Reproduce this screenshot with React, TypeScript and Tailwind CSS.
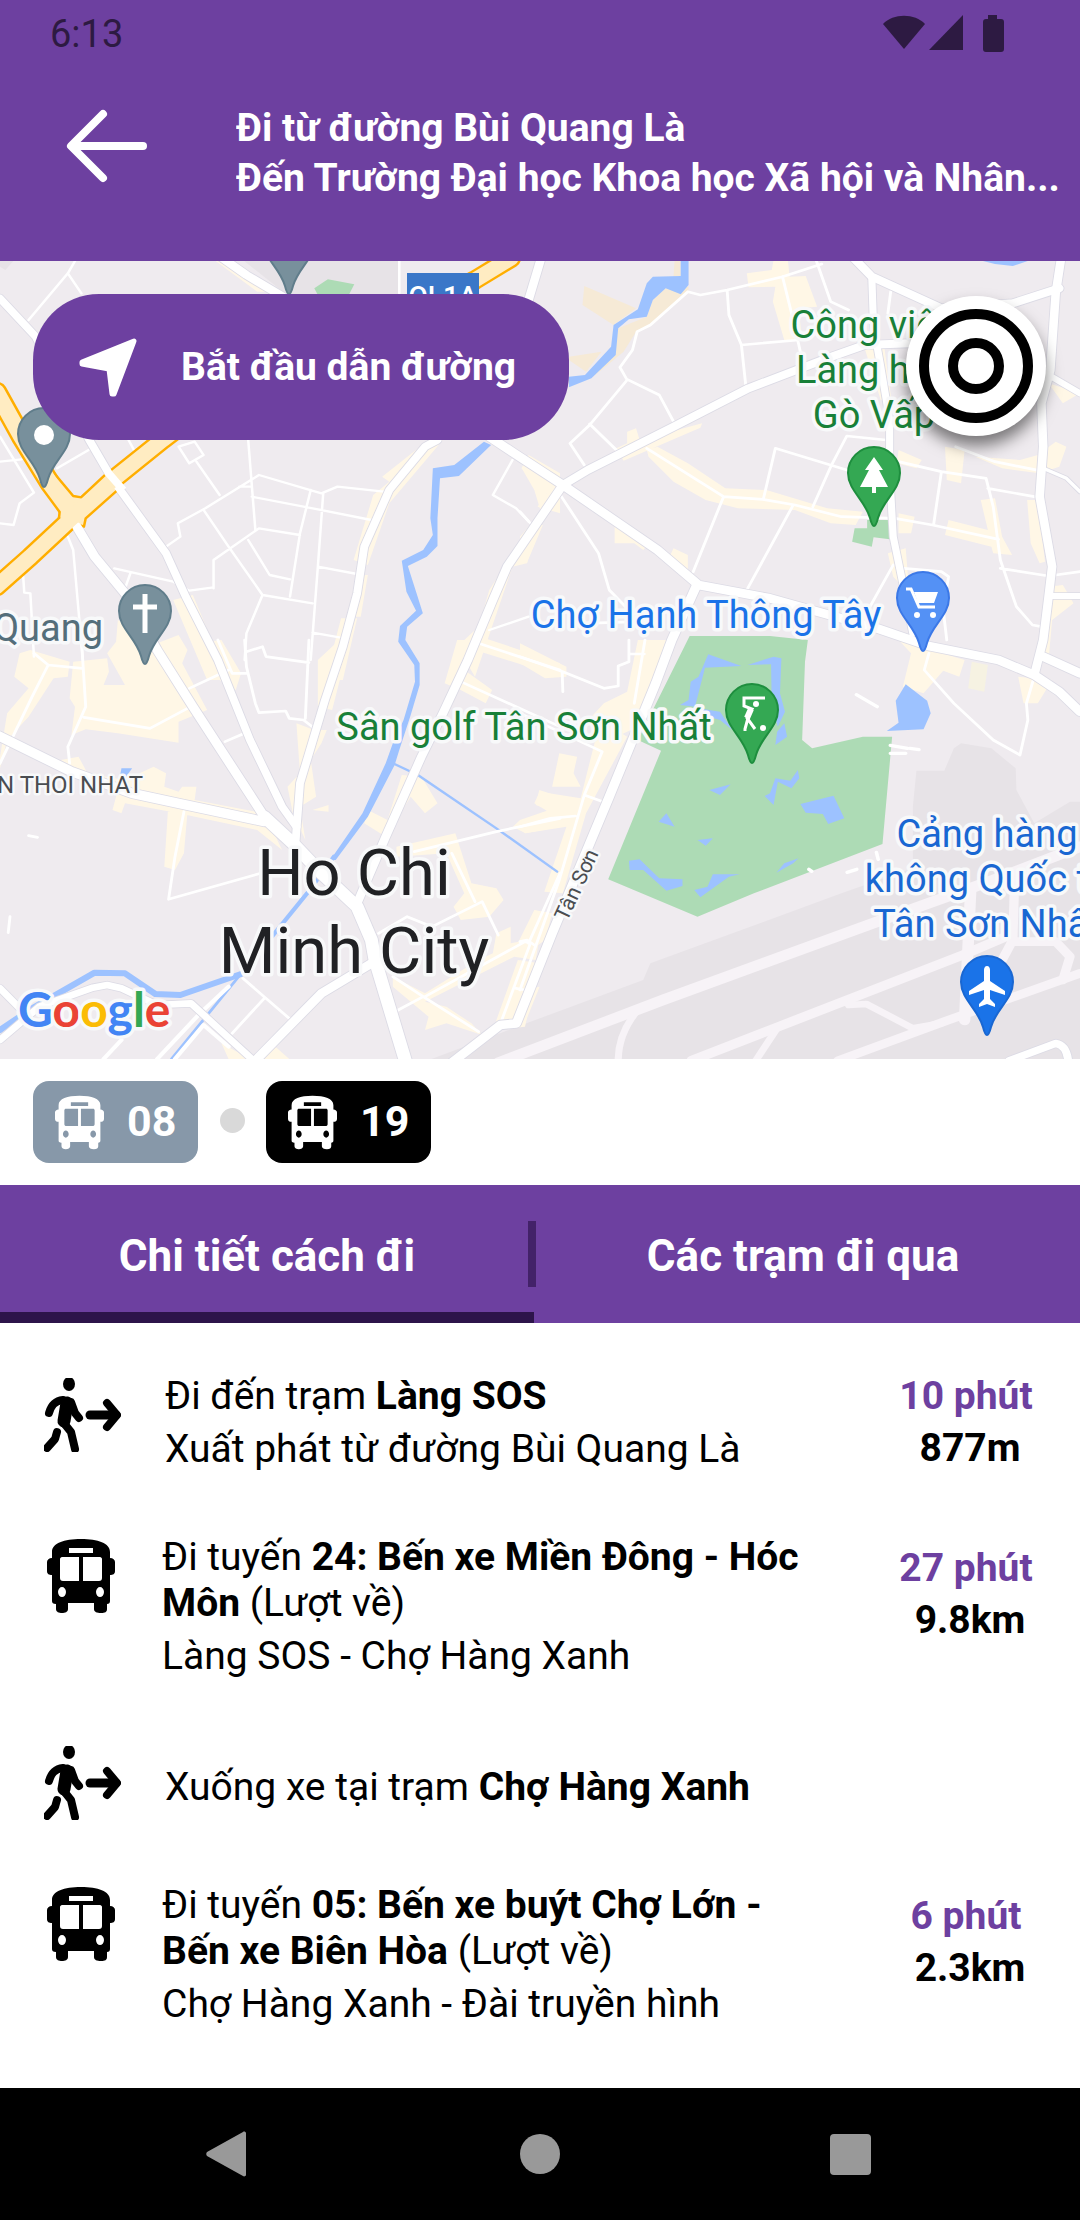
import type { ReactNode } from "react";

/* ---------- Icons ---------- */

function BusIcon({ className }: { className: string }) {
  return (
    <svg viewBox="0 0 68 74" className={className} fill="currentColor" aria-hidden="true">
      <path
        fillRule="evenodd"
        d="M5 13C5 4 17 0 34 0s29 4 29 13v6c3 0 5 2 5 4v9c0 3-2 4-5 4v26c0 2-1 3-3 3v5c0 3-2 4-6 4s-7-1-7-4v-6H21v6c0 3-3 4-6 4s-6-1-6-4v-5c-3 0-4-1-4-3V36c-3 0-5-1-5-4v-9c0-2 2-4 5-4zM22 9v5h24V9zM15 18c-1 0-2 1-2 2v19c0 2 1 3 3 3h16V18zM36 18v24h16c2 0 3-1 3-3V20c0-1-1-2-2-2zM15 48c-2 0-4 2-4 5s2 5 4 5 4-2 4-5-2-5-4-5zM53 48c-2 0-4 2-4 5s2 5 4 5 4-2 4-5-2-5-4-5z"
      />
    </svg>
  );
}

function WalkIcon({ className }: { className: string }) {
  return (
    <svg viewBox="0 0 77 74" className={className} fill="none" stroke="currentColor" strokeLinecap="round" strokeLinejoin="round" aria-hidden="true">
      <ellipse cx="25" cy="6" rx="6" ry="7" fill="currentColor" stroke="none" />
      <path d="M5 35c2-7 5-12 14-13" strokeWidth="8" />
      <path d="M27 24l4 11 4 5" strokeWidth="8" />
      <path d="M23 25l-3 18" strokeWidth="13" />
      <path d="M19 44l8 10 4 17" strokeWidth="8" />
      <path d="M13 54l-2 7-8 9" strokeWidth="8" />
      <path d="M46 37h26" strokeWidth="9" />
      <path d="M63 25l10 12-10 12" strokeWidth="8" />
    </svg>
  );
}

/* ---------- Map ---------- */

const TILES = ["translate(0 0)", "translate(1456 0)", "translate(0 1140)", "translate(1456 1140)"];

type Shape = { t: number; c: string; d: string };
type Line = { t: number; w: number; d: string };

const LAND: Shape[] = [
  { t: 0, c: "#e7e3e7", d: "M680 0H1115V110H810z M0 0H40L15 30 0 20z" },
  { t: 3, c: "#e7e3e7", d: "M1110 392 1188 392 1215 325 1235 310 1320 325 1388 385 1390 450 1440 550 1540 485 1600 485V1300H-260V1262L-20 1165 345 1020 365 970 900 760 1100 685 1100 500z" },
  { t: 0, c: "#addbb5", d: "M880 85 918 58 992 73 972 115 895 115z" },
  { t: 1, c: "#addbb5", d: "M972 780H1033L1035 838 990 832 985 860 930 845 937 805 972 805z" },
  { t: 1, c: "#f6ead6", d: "M180 78 325 145 262 195 175 135z M137 290 228 275 185 335 137 300z M472 80 472 95 372 190 325 215 290 275 205 350 262 285 275 205 355 170 372 120 408 85z M433 0H450V48H430z" },
  { t: 1, c: "#fff7e6", d: "M635 40 705 30 710 0H750L755 50 800 48 832 140 780 145 790 240 740 240 708 125 715 80 640 82z M300 515 325 505 335 540 510 490 505 503 290 602 270 565 300 550z M355 570 385 560 470 610 575 685 690 690 860 745 960 755 940 795 870 790 770 750 610 745 520 720 430 665 360 590z M5 625 50 640 85 730 60 760 40 690z M1190 560 1245 570 1235 670 1195 660z M1275 590 1400 600 1450 585 1500 545 1530 560 1510 620 1455 640 1350 625z M1290 720 1330 715 1350 830 1378 885 1325 880 1320 860 1190 825 1200 780 1310 810z M1420 720H1450L1470 905 1455 910 1430 850z M265 790 370 840 345 870 320 850 265 850z M430 865 470 885 470 930 410 910z M1030 880 1080 865 1090 1000 1045 950z M1060 760 1105 770 1095 820 1060 820z M1480 980 1520 975 1550 1030 1490 1080 1480 1200H1440L1465 1070z M1480 370 1568 400 1520 430z M965 265 1020 260 1040 420 1010 420z M1060 570 1125 600 1110 625 1055 610z M0 830 40 780 20 910 0 905z" },
  { t: 0, c: "#fff7e6", d: "M600 0H640L720 55 780 95 720 95z M1070 650 1200 540 1240 540 1090 730 1030 915 990 900 1045 705 1090 665z M1000 945H1030L1010 1070 970 1070z M955 1075H1000L960 1260H910z M1480 585 1568 640V760L1505 740 1530 700 1460 625z M1490 790 1520 795 1475 910 1435 920 1330 1250 1280 1160 1340 1100 1370 990z M1345 1130 1568 1210V1250L1330 1170z M485 1020 540 1005 640 1260 580 1260z" },
  { t: 2, c: "#fff7e6", d: "M55 40 85 30 195 65 190 110 150 115 80 230 20 300 0 385V350L20 220 80 145 40 110z M205 65 300 55 305 95 290 135H350L300 40 325 5 330-60 440 10 500-15 525 30 510 70 580 210 500 245 500 308 330 280 240 268 200 285 210 200 195 175z M545 10 620 0 675 100 660 150 600 110z M170 360 220 350 245 400 350 420 430 380 465 400 460 440 500 455 510 440 550 440 545 480 740 520 790 630 720 570 500 520 350 490 340 520 315 510 330 450z M470 515H525L515 640 490 690 460 680z M1280 0H1330L1300 90 1378 150 1360 190 1290 150 1245 130z M1125 405 1180 410 1225 490 1190 520 1150 470 1080 590 1020 550 1030 510 1085 540z M1110 620 1275 580 1320 730 1390 745 1410 780 1370 830 1290 840 1270 800 1300 760 1250 640 1110 650z M830 250 880 270H915L900 310 870 360 885 470 840 500 855 600 820 520 805 440 840 400z M875 510 920 495V515z M1100 1010 1190 1060 1340 960 1380 940 1390 880 1430 860V910L1480 900 1500 810 1520 830 1500 960 1440 950 1190 1085 1250 1100 1320 1150 1350 1185 1250 1150 1190 1170 1200 1130 1100 1040z M1450 960 1510 970 1470 1160 1380 1170z M620 1210 700 1257H640z M740 1257 760 1210 810 1257z M1510 450 1568 470V520L1500 495z M1450 550 1568 520V560L1470 580z M890 60 950 0H980L930 210 890 200z" },
  { t: 3, c: "#fff7e6", d: "M0 10 130 80V110L70 115 0 70z M330 0H415L330 260 270 290 200 230 235 190 300 155z M225 240 300 290 185 520 120 760 68 755 130 560 15 580-20 560 0 540 75 512 40 490 55 455 170 475 185 410z M110 340 160 350 150 400 170 440H90z M40 810 90 820 70 900 20 940-20 940z M0 960 40 985 0 1110z M1060 0 1245 60 1230 110 1185 92 1130 160 1072 140 1095 40z M1395 110 1490 120 1450 190H1410z M0 1050 55 1040 10 1160z" },
  { t: 3, c: "#f6f2e2", d: "M1265 65 1310 75 1300 155 1255 145z" },
  { t: 3, c: "#addbb5", d: "M475-12H700L806 0 798 65 790 300 818 325 960 290H1042L1015 612 655 760 497 830 247 718 395 332 330 300z" },
  { t: 1, c: "#9dc2ff", d: "M450 0H472V75L450 103 408 85 372 120 355 170 305 178 275 205 268 285 200 355 137 382V350L182 345 255 260 262 195 330 148 355 70 372 50 450 48z M1285 0H1430L1380 18 1330 12z" },
  { t: 0, c: "#9dc2ff", d: "M1355 545 1375 555 1285 648 1232 655 1225 775 1225 858 1195 890 1142 918 1165 995 1184 1060 1140 1100 1135 1140 1175 1210 1175 1275 1150 1365 1118 1470 1105 1515 1030 1670 940 1800 925 1800 1015 1660 1080 1510 1100 1450 1130 1380 1162 1265 1160 1215 1115 1145 1120 1098 1165 1052 1138 995 1125 902 1185 870 1212 825 1205 775 1212 625 1272 615z" },
  { t: 2, c: "#9dc2ff", d: "M340 385 370 385 350 415 335 415z" },
  { t: 3, c: "#9dc2ff", d: "M527 43 620 78 518 83 490 200 448 195 472 180 478 125 500 110z M500 205 560 215 595 270 560 240 510 225z M637 75 710 50 732 55 728 160 742 215 722 260 705 200 703 73z M740 250 748 290 715 315 720 275z M590 433 560 465 530 450z M778 390 782 415 760 445 722 425 710 495 685 468 700 460 715 415 757 422z M785 492 878 467 908 535 863 552 848 522 800 518z M410 520 433 560 388 545z M497 600 540 595 520 617z M305 662 335 658 390 715 455 718V738L410 752 345 690 307 690z M488 750 525 740 540 703H615L585 710 505 772z M780 655 740 670 718 698 765 670z M1080 133 1140 182 1150 220 1130 268 1027 273 1060 248 1052 182z" },
];

const STREAMS: Line[] = [
  { t: 2, w: 12, d: "M935 650 860 760 765 885 672 1005" },
  { t: 2, w: 8, d: "M672 1005 480 1257" },
  { t: 2, w: 18, d: "M675 1002 505 1065 435 1062 350 1000 265 998 90 1105 0 1170" },
  { t: 2, w: 7, d: "M1100 370 1170 405 1390 565 1560 695" },
];

const RUNWAYS: Line[] = [
  { t: 3, w: 32, d: "M-60 1268 400 1080 1000 845 1300 730 1568 620" },
  { t: 3, w: 28, d: "M480 1262 700 1170 1240 945 1360 890" },
  { t: 3, w: 26, d: "M890 1262 1200 1140 1568 1000" },
  { t: 3, w: 20, d: "M920 1095 970 1092 1100 1165 1180 1150" },
  { t: 3, w: 20, d: "M330 1110Q275 1180 275 1262" },
  { t: 3, w: 20, d: "M720 1165 660 1262" },
  { t: 3, w: 32, d: "M1262 750 1245 1140" },
  { t: 3, w: 26, d: "M1385 720 1380 900 1350 960" },
  { t: 3, w: 26, d: "M1380 905 1500 905 1540 950 1520 1020" },
];

const MINOR: Line[] = [
  { t: 0, w: 7, d: "M210 3 190 40 80 180M190 40 228 100M695 540 715 810M550 605 615 705M500 560 545 545 570 585 530 610 500 560M465 860 505 830 498 790 575 745 725 645 900 700 945 680 1075 695M570 750 640 860 735 1005 875 1030M705 710 890 748 1040 780M870 690 840 820 812 1010M905 700 890 920 870 1200M598 985V900L725 805 840 825M695 840 755 945 812 958M890 920 1000 942M735 1005 690 1120 685 1200M320 925 485 965 530 992 598 982M365 940 350 985M190 830 205 870 232 1200M65 950 68 998 85 1000 95 1190M0 790 38 795 55 730 95 698 0 530M0 605 60 598M160 625 248 570M360 540 375 570M1435 600 1380 705 1445 745 1485 790M1370 1110 1480 1070M875 1118 950 1132M1118 0V100M670 680H700" },
  { t: 1, w: 8, d: "M845 12 735 50 580 90 505 105 470 95 365 195 328 215 315 270 280 322 300 360 195 495 140 550 180 615M300 358 390 405 430 485M195 492 270 570M580 90 585 165 620 255 632 375M620 255 780 240M735 50 765 180 785 275M830 3 870 125 920 150M1038 95 1030 160M355 565 570 710 680 718 770 735 900 770 1050 775 1155 795 1340 838M715 565 915 630M715 565 682 715M1025 540 915 528 870 620 820 740M1060 605 1180 635 1305 655 1325 740 1345 900 1390 1040 1435 1095 1460 1100M1180 635 1158 795M1310 685 1440 710M570 710 485 935M765 735 635 990M110 700 220 880 250 990 300 1045M0 755 25 785M1345 925 1480 948 1568 935M1045 915 980 1040M1075 925 1180 935 1200 950 1185 1050 1195 1140M1220 560 1330 605 1455 632M180 1090 330 1085" },
  { t: 2, w: 8, d: "M95 40 135 75 230 85M135 75 90 170 0 370M228 0 240 200 190 320 195 370M235 232 420 265 525 205M530 145 640 90M610 0 650 100 690 100M685 0 690 80 715 190 725 218 800 213 810 235 850 240 880 265M865 0 855 235M690 35 735 20 745 50 865 68M630 305 680 282M515 515 490 650 472 778 730 700M680 1015 815 1140M740 1075 650 1180M80 587 105 592M28 830 23 878M1290 125 1568 260M1160 635 1390 575 1568 535M1265 640 1330 785M1060 880 1140 830 1210 860 1350 785 1395 885M1100 1010 1185 1070 1340 1175M1185 1070 1115 1110M1190 1070 1470 905 1485 910 1405 1140M1568 700 1480 910M1445 1045 1470 1050M1340 10 1568 90" },
  { t: 2, w: 12, d: "M440 1257 560 1120 640 1040M490 1257 570 1155 640 1220M290 1257 340 1200" },
  { t: 3, w: 8, d: "M0 50 120 95 235 145 275 138V78L305 65V0M118 95 120 155M350 0 320 190M310 42H348M0 220 230 335 180 465 110 720 0 1050M180 465 240 488M0 560 85 535 155 528M1145 40 1132 90 1215 190 1325 300 1400 345 1422 240 1418 190 1440 110M0 905 20 900 40 915" },
  { t: 3, w: 10, d: "M942 164 1000 200M1037 316 1085 325M1092 325 1117 329M1037 340H1080M998 637 1003 658M809 688 817 694M916 697 943 688" },
];

const MAJOR: Line[] = [
  { t: 0, w: 22, d: "M0 115 100 230 250 540 310 650 330 680 465 880 520 1010 610 1200 640 1280 700 1440 790 1640 830 1700" },
  { t: 0, w: 26, d: "M215 800 265 890 350 1000 440 1170 540 1340 740 1670" },
  { t: 2, w: 36, d: "M740 530 820 610 900 700 1000 800 1040 900 1050 960 1135 1262" },
  { t: 0, w: 22, d: "M1225 540 1190 560 1090 690 1020 860 1000 1000 960 1160 910 1320 840 1570 828 1740" },
  { t: 0, w: 26, d: "M1370 530 1440 580 1576 675 1841 870 1956 975 2156 1015 2456 1105 2600 1158 2796 1200 2896 1245 2966 1295 3024 1355" },
  { t: 0, w: 24, d: "M1576 675 1420 920 1380 1020 1310 1200 1240 1360 1180 1490 1080 1730 1000 1930" },
  { t: 0, w: 24, d: "M620-8 690 45 800 115M1515-5 1480 120" },
  { t: 1, w: 24, d: "M120 675 190 630 430 500 640 385 860 295 965 255 1090 250" },
  { t: 1, w: 24, d: "M935-5 985 50 1180 145 1380 130 1510 85" },
  { t: 1, w: 20, d: "M985 50 990 200 1010 320 1035 480 1035 640 1045 830 1070 960 1100 1120" },
  { t: 1, w: 24, d: "M1515-5 1500 100 1485 330 1460 430 1465 560 1455 710 1490 920 1480 1010 1465 1140 1440 1245" },
  { t: 1, w: 18, d: "M1480 345 1568 400M1490 1008H1568" },
  { t: 1, w: 10, d: "M1465 625 1530 655 1568 695" },
  { t: 1, w: 26, d: "M495 975 425 1140 380 1270 250 1610 90 2020-10 2290-55 2295-190 2407" },
  { t: 2, w: 28, d: "M-5 287 200 395 370 460 500 490 740 545" },
  { t: 2, w: 20, d: "M0 1045 60 1110M0 1200 110 1100 260 1043 300 1035 340 1045 440 1095 535 1090 710 1262" },
  { t: 2, w: 26, d: "M715 1262 900 1060 1040 970" },
  { t: 3, w: 26, d: "M1465 50 1568 100" },
  { t: 3, w: 22, d: "M1370 1262 1500 1210Q1530 1215 1535 1262" },
];

const HIGHWAYS: Line[] = [
  { t: 0, w: 46, d: "M-10 395 60 530 140 670 195 750" },
  { t: 0, w: 44, d: "M-10 980 85 890 200 775 310 665 455 540 700 340M1250 105 1330 60 1430-5" },
];

function Strokes({ lines, color, extra = 0 }: { lines: Line[]; color: string; extra?: number }) {
  return (
    <g fill="none" stroke={color} strokeLinejoin="round" strokeLinecap="round">
      {lines.map((l, i) => (
        <path key={i} d={l.d} strokeWidth={l.w + extra} transform={TILES[l.t]} />
      ))}
    </g>
  );
}

function Pin({ x, y, fill, edge, children }: { x: number; y: number; fill: string; edge: string; children?: ReactNode }) {
  return (
    <g transform={`translate(${x} ${y})`}>
      <path d="M0 0C-2 0-3-4-4-8-9-26-26-36-26-53A26 26 0 0 1 26-53C26-36 9-26 4-8 3-4 2 0 0 0z" fill={fill} stroke={edge} strokeWidth="2" />
      {children}
    </g>
  );
}

const HALO = { stroke: "#f8f9fa", strokeWidth: 7, strokeLinejoin: "round", paintOrder: "stroke" } as const;

function CityMap() {
  return (
    <svg viewBox="0 261 1080 798" preserveAspectRatio="xMidYMid slice" className="block h-[798px] w-full font-['Roboto',sans-serif]" role="img" aria-label="Bản đồ">
      <rect y="261" width="1080" height="798" fill="#efebef" />
      <g transform="translate(0 260) scale(.35714 .33333)">
        {LAND.map((s, i) => (
          <path key={i} d={s.d} fill={s.c} transform={TILES[s.t]} />
        ))}
        <Strokes lines={RUNWAYS} color="#f7f3f7" />
        <Strokes lines={STREAMS} color="#9dc2ff" />
        <Strokes lines={MINOR} color="#ffffff" />
        <Strokes lines={MAJOR} color="#dcdbe5" extra={5} />
        <Strokes lines={HIGHWAYS} color="#ffae00" extra={14} />
        <path d="M140 625 205 708 228 712 300 645 340 680 240 775 235 800 165 775 168 745 115 675z" fill="#ffecc2" stroke="#ffae00" strokeWidth="7" strokeLinejoin="round" />
        <Strokes lines={MAJOR} color="#ffffff" />
        <Strokes lines={HIGHWAYS} color="#ffecc2" />
        <path d="M300 635 345 690" stroke="#fff" strokeWidth="22" />
      </g>

      <rect x="407" y="273" width="72" height="46" fill="#3a77c8" />
      <text x="443" y="306" textAnchor="middle" fontSize="28" fontWeight="500" fill="#fff">QL1A</text>

      <g fontSize="38" {...HALO}>
        <g fill="#188038" textAnchor="middle">
          <text x="874" y="338">Công viên</text>
          <text x="874" y="383">Làng hoa</text>
          <text x="874" y="428">Gò Vấp</text>
          <text x="524" y="740">Sân golf Tân Sơn Nhất</text>
        </g>
        <text x="706" y="628" textAnchor="middle" fill="#1a73e8">Chợ Hạnh Thông Tây</text>
        <g fill="#1967d2" textAnchor="middle">
          <text x="987" y="847">Cảng hàng</text>
          <text x="987" y="892">không Quốc tế</text>
          <text x="987" y="937">Tân Sơn Nhất</text>
        </g>
        <text x="103" y="641" textAnchor="end" fill="#546e7a">Quang</text>
      </g>
      <g {...HALO} strokeWidth={5} fill="#4a4d51">
        <text x="143" y="793" textAnchor="end" fontSize="24">N THOI NHAT</text>
        <text transform="translate(567 922) rotate(-65)" fontSize="21">Tân Sơn</text>
      </g>
      <g fontSize="65" fill="#202124" textAnchor="middle" {...HALO}>
        <text x="354" y="895">Ho Chi</text>
        <text x="354" y="973">Minh City</text>
      </g>

      <Pin x={289} y={294} fill="#78909c" edge="#607d8b" />
      <Pin x={44} y={487} fill="#78909c" edge="#607d8b">
        <circle cy="-52" r="10" fill="#fff" />
      </Pin>
      <Pin x={145} y={664} fill="#78909c" edge="#607d8b">
        <path d="M0-70V-31M-12-57H12" stroke="#fff" strokeWidth="5" />
      </Pin>
      <Pin x={874} y={526} fill="#34a853" edge="#1e8e3e">
        <path d="M0-69 9-56H5L14-39H2V-33H-2V-39H-14L-5-56H-9z" fill="#fff" />
      </Pin>
      <Pin x={752} y={763} fill="#34a853" edge="#1e8e3e">
        <g fill="none" stroke="#fff" strokeWidth="3">
          <path d="M13-65H-8V-57L0-54-5-45 3-34M-4-45-7-34V-32" />
          <path d="M-1-54-5-45" strokeWidth="6" />
          <circle cx="4" cy="-59" r="3" fill="#fff" stroke="none" />
          <circle cx="11" cy="-35" r="3" fill="#fff" stroke="none" />
        </g>
      </Pin>
      <Pin x={923} y={651} fill="#5491f5" edge="#3b78e7">
        <path d="M-17-62H-12L-4-44H12" fill="none" stroke="#fff" strokeWidth="3" />
        <path d="M-9-59H15L11-48H-5z" fill="#fff" />
        <circle cx="-6" cy="-36" r="3" fill="#fff" />
        <circle cx="10" cy="-36" r="3" fill="#fff" />
      </Pin>
      <Pin x={987} y={1035} fill="#1a73e8" edge="#1967d2">
        <path d="M0-69c2 0 3 2 3 4v11L18-44v4L3-45v9l5 5v3l-8-3-8 3v-3l5-5v-9l-15 5v-4L-3-54v-11c0-2 1-4 3-4z" fill="#fff" />
      </Pin>

      <text x="18" y="1027" fontSize="48" fontWeight="700" className="font-['Lato',sans-serif]" {...HALO}>
        <tspan fill="#4285f4">G</tspan>
        <tspan fill="#ea4335">o</tspan>
        <tspan fill="#fbbc05">o</tspan>
        <tspan fill="#4285f4">g</tspan>
        <tspan fill="#34a853">l</tspan>
        <tspan fill="#ea4335">e</tspan>
      </text>
    </svg>
  );
}

/* ---------- Route summary and steps ---------- */

function RouteChip({ number, color }: { number: string; color: string }) {
  return (
    <button type="button" className={`flex h-[82px] w-[165px] items-center rounded-2xl pl-[22px] text-white ${color}`}>
      <BusIcon className="h-[55px] w-[49px]" />
      <span className="ml-[23px] pb-[2px] text-[43px] leading-[50px] font-bold">{number}</span>
    </button>
  );
}

type Step = { kind: "walk" | "bus"; title: ReactNode; detail?: string; time?: string; distance?: string };

const STEPS: Step[] = [
  { kind: "walk", title: <>Đi đến trạm <b>Làng SOS</b></>, detail: "Xuất phát từ đường Bùi Quang Là", time: "10 phút", distance: "877m" },
  { kind: "bus", title: <>Đi tuyến <b>24: Bến xe Miền Đông - Hóc Môn</b> (Lượt về)</>, detail: "Làng SOS - Chợ Hàng Xanh", time: "27 phút", distance: "9.8km" },
  { kind: "walk", title: <>Xuống xe tại trạm <b>Chợ Hàng Xanh</b></> },
  { kind: "bus", title: <>Đi tuyến <b>05: Bến xe buýt Chợ Lớn - Bến xe Biên Hòa</b> (Lượt về)</>, detail: "Chợ Hàng Xanh - Đài truyền hình", time: "6 phút", distance: "2.3km" },
];

function StepRow({ step }: { step: Step }) {
  const walk = step.kind === "walk";
  return (
    <li className="flex items-start">
      <div className={walk ? "w-[121px] shrink-0 pt-[5px]" : "w-[118px] shrink-0 pt-[5px]"}>
        {walk ? <WalkIcon className="h-[74px] w-[77px]" /> : <BusIcon className="ml-[3px] h-[74px] w-[68px]" />}
      </div>
      <div className={step.detail ? "flex-1 pr-8" : "flex-1 self-center pt-3"}>
        <p>{step.title}</p>
        {step.detail && <p className="mt-[7px]">{step.detail}</p>}
      </div>
      {step.time && (
        <div className={walk ? "w-[192px] shrink-0 text-center font-bold" : "w-[192px] shrink-0 pt-[11px] text-center font-bold"}>
          <p className="text-[#6d40a0]">{step.time}</p>
          <p className="mt-[6px] pl-2">{step.distance}</p>
        </div>
      )}
    </li>
  );
}

export default function App() {
  return (
    <div className="flex min-h-screen flex-col bg-white font-['Roboto',sans-serif] text-black">
      <header className="h-[261px] bg-[#6d40a0] text-white">
        <div className="flex h-[66px] items-center justify-between pr-[75px] pl-[50px] text-[#2d1a42]">
          <span className="pt-[2px] text-[38px] leading-[66px]">6:13</span>
          <svg viewBox="0 0 122 38" className="h-[38px] w-[122px]" fill="currentColor" aria-hidden="true">
            <path d="M21 35 0 10C10-1 32-1 42 10z" />
            <path d="M80 1V36H46z" />
            <path d="M105 1h9v4h4c2 0 3 1 3 3v27c0 2-1 3-3 3h-15c-2 0-3-1-3-3V8c0-2 1-3 3-3h2z" />
          </svg>
        </div>
        <div className="flex items-start pt-[37px] pr-[10px]">
          <button type="button" aria-label="Quay lại" className="mt-[5px] ml-[65px] shrink-0">
            <svg viewBox="0 0 84 76" className="h-[76px] w-[84px]" fill="none" stroke="currentColor" strokeWidth="8" strokeLinecap="round" strokeLinejoin="round" aria-hidden="true">
              <path d="M38 6 6 38 38 70" />
              <path d="M8 38H78" />
            </svg>
          </button>
          <div className="ml-[87px] min-w-0 flex-1 text-[39px] leading-[50px] font-bold">
            <p className="truncate">Đi từ đường Bùi Quang Là</p>
            <p className="truncate">Đến Trường Đại học Khoa học Xã hội và Nhân...</p>
          </div>
        </div>
      </header>

      <section className="relative">
        <CityMap />
        <button type="button" className="absolute top-[33px] left-[33px] flex h-[146px] w-[536px] items-center rounded-[66px] bg-[#6d40a0] pl-[44px] text-white">
          <svg viewBox="0 0 64 64" className="h-[64px] w-[64px]" fill="currentColor" stroke="currentColor" strokeWidth="5" strokeLinejoin="round" aria-hidden="true">
            <path d="M57 6 37 59H35L32 34 5 29V27z" />
          </svg>
          <span className="ml-[40px] text-[39px] leading-[46px] font-bold">Bắt đầu dẫn đường</span>
        </button>
        <button type="button" aria-label="Vị trí của tôi" className="absolute top-[35px] right-[34px] flex size-[140px] items-center justify-center rounded-full bg-white shadow-[0_10px_16px_rgba(0,0,0,0.5)]">
          <svg viewBox="0 0 116 116" className="size-[116px]" fill="none" stroke="#000" strokeWidth="10" aria-hidden="true">
            <circle cx="58" cy="58" r="52" />
            <circle cx="58" cy="58" r="23" />
          </svg>
        </button>
      </section>

      <div className="flex h-[126px] items-center px-[33px]">
        <RouteChip number="08" color="bg-[#8798a9]" />
        <span className="mr-[21px] mb-[4px] ml-[22px] size-[25px] rounded-full bg-[#d9d9d9]" />
        <RouteChip number="19" color="bg-black" />
      </div>

      <div role="tablist" className="relative grid h-[138px] grid-cols-[534fr_546fr] bg-[#6d40a0] text-[44px] leading-[52px] font-bold text-white">
        <button type="button" role="tab" aria-selected="true" className="border-b-[11px] border-[#2d144a] pt-[14px]">Chi tiết cách đi</button>
        <button type="button" role="tab" aria-selected="false" className="pt-[3px] pr-2">Các trạm đi qua</button>
        <span className="absolute top-[36px] left-[528px] h-[66px] w-2 bg-[#432269]" />
      </div>

      <ol className="flex flex-1 flex-col gap-[62px] pt-[50px] pr-[18px] pb-[60px] pl-[44px] text-[39px] leading-[46px]">
        {STEPS.map((s, i) => (
          <StepRow key={i} step={s} />
        ))}
      </ol>

      <nav className="grid h-[132px] grid-cols-[452fr_176fr_444fr] items-center justify-items-center bg-black pr-2 text-[#999999]">
        <button type="button" aria-label="Trở về">
          <svg viewBox="0 0 40 46" className="h-[46px] w-[40px]" fill="currentColor" aria-hidden="true">
            <path d="M37 1c1-1 3 0 3 1v42c0 1-2 2-3 1L1 25c-1-1-1-3 0-4z" />
          </svg>
        </button>
        <button type="button" aria-label="Màn hình chính" className="size-[40px] rounded-full bg-current" />
        <button type="button" aria-label="Gần đây" className="size-[41px] rounded-sm bg-current" />
      </nav>
    </div>
  );
}
